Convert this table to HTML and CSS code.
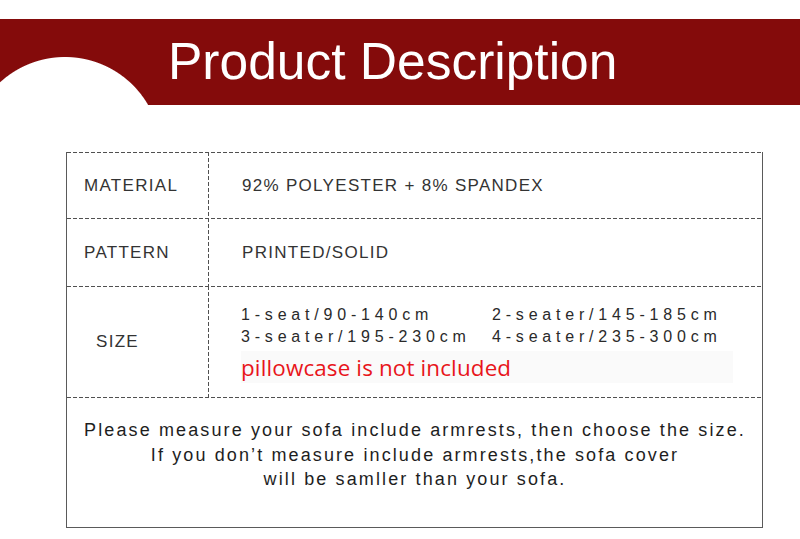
FILE: index.html
```html
<!DOCTYPE html>
<html lang="en">
<head>
<meta charset="utf-8">
<title>Product Description</title>
<link rel="stylesheet" href="styles.css">
</head>
<body>
<header class="banner">
  <h1 class="title">Product Description</h1>
</header>
<main class="sheet">
  <div class="spec">
    <div class="row row-material">
      <div class="label">MATERIAL</div>
      <div class="value">92% POLYESTER + 8% SPANDEX</div>
    </div>
    <div class="row row-pattern">
      <div class="label">PATTERN</div>
      <div class="value">PRINTED/SOLID</div>
    </div>
    <div class="row row-size">
      <div class="label label-indent">SIZE</div>
      <div class="value-size">
        <div class="sizes">
          <span>1-seat/90-140cm</span><span>2-seater/145-185cm</span>
          <span>3-seater/195-230cm</span><span>4-seater/235-300cm</span>
        </div>
        <div class="note">pillowcase is not included</div>
      </div>
    </div>
    <div class="notice">
      <p>Please measure your sofa include armrests, then choose the size.<br>If you don’t measure include armrests,the sofa cover<br>will be samller than your sofa.</p>
    </div>
  </div>
</main>
</body>
</html>
```
FILE: styles.css
```css
html, body {
  margin: 0;
  padding: 0;
  background: #ffffff;
}

body {
  font-family: "Liberation Sans", Arial, sans-serif;
  color: #2a2a2a;
  width: 800px;
  height: 539px;
  overflow: hidden;
}

.banner {
  margin-top: 19px;
  height: 86px;
  background: radial-gradient(circle at 65px 134px, #ffffff 0 95.5px, #840b0b 96.5px);
  background-color: #840b0b;
}

.title {
  margin: 0;
  padding-left: 168px;
  font-family: "Liberation Sans", Arial, sans-serif;
  font-weight: normal;
  font-size: 51.5px;
  line-height: 84px;
  color: #ffffff;
}

.sheet {
  padding: 47px 0 0 66px;
}

.spec {
  width: 695px;
  border-left: 1px solid #5a5a5a;
  border-right: 1px solid #5a5a5a;
  border-bottom: 1px solid #5a5a5a;
}

.row,
.notice {
  background-image: linear-gradient(to right, #505050 4px, transparent 4px);
  background-size: 6px 1px;
  background-repeat: repeat-x;
  background-position: left top;
}

.row {
  display: flex;
}

.row-material { height: 66px; }
.row-pattern { height: 68px; }
.row-size { height: 111px; }

.label {
  width: 142px;
  flex: none;
  box-sizing: border-box;
  padding: 1px 0 0 17px;
  display: flex;
  align-items: center;
  font-size: 17px;
  letter-spacing: 1.3px;
  line-height: 20px;
  color: #333333;
  background-image: linear-gradient(to bottom, #505050 4px, transparent 4px);
  background-size: 1px 6px;
  background-repeat: repeat-y;
  background-position: right top;
}

.label-indent {
  padding-left: 29px;
}

.value {
  flex: 1;
  padding: 1px 0 0 33px;
  display: flex;
  align-items: center;
  font-size: 17px;
  letter-spacing: 1.3px;
  line-height: 20px;
  color: #333333;
}

.value-size {
  flex: 1;
  padding: 18px 0 0 32px;
}

.sizes {
  display: grid;
  grid-template-columns: 251px auto;
  font-size: 16px;
  letter-spacing: 4.8px;
  line-height: 22px;
  color: #2a2a2a;
}

.note {
  margin-top: 3px;
  width: 492px;
  height: 32px;
  padding-top: 2px;
  box-sizing: border-box;
  background: #fafafa;
  font-family: "Open Sans", "Noto Sans", sans-serif;
  font-size: 22.4px;
  line-height: 30px;
  letter-spacing: 0.15px;
  color: #e8151b;
}

.notice {
  height: 130px;
  box-sizing: border-box;
  padding-top: 21px;
  padding-left: 1px;
}

.notice p {
  margin: 0;
  text-align: center;
  font-size: 18px;
  letter-spacing: 2.12px;
  line-height: 24.5px;
  color: #1e1e1e;
}
```
